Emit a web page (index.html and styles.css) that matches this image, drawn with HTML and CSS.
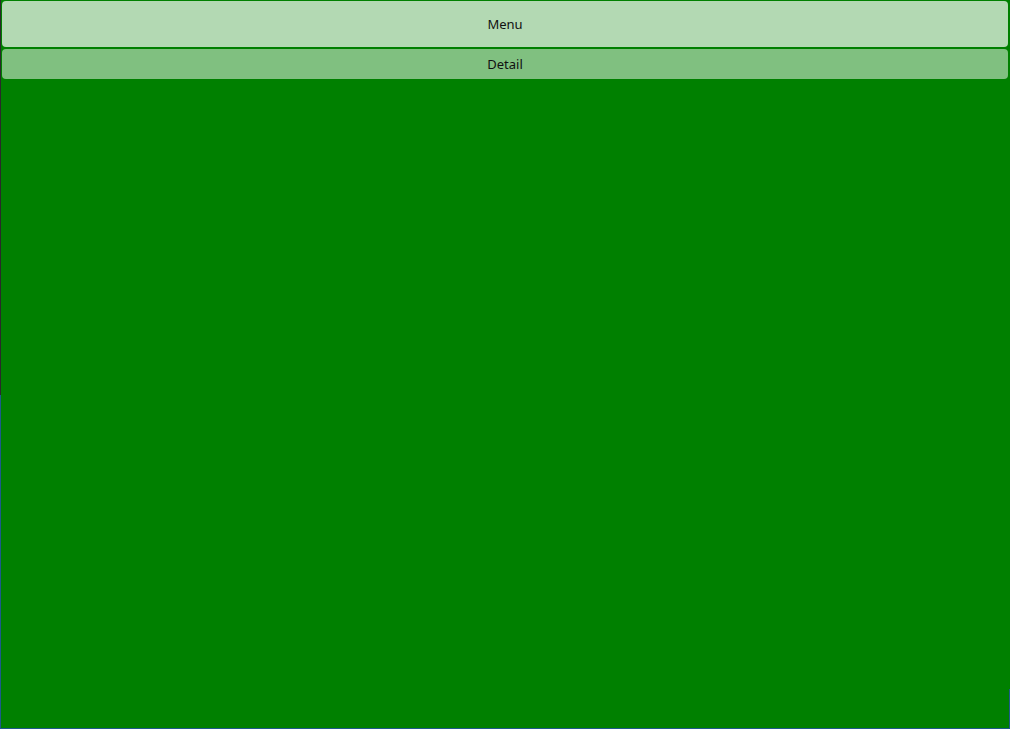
FILE: index.html
```html
<!DOCTYPE html>
<html>
<head>
<meta charset="utf-8">
<link rel="stylesheet" href="styles.css">
</head>
<body>
<div class="app">
  <div class="btn menu">Menu</div>
  <div class="btn detail">Detail</div>
</div>
</body>
</html>
```
FILE: styles.css
```css
html, body {
  margin: 0;
  padding: 0;
  width: 1010px;
  height: 729px;
  overflow: hidden;
}
body {
  background: #008000;
  font-family: "Noto Sans", "Open Sans", sans-serif;
  font-size: 13px;
  color: #111;
}
.app {
  box-sizing: border-box;
  width: 1010px;
  height: 729px;
  padding: 1px 2px 0 2px;
  display: flex;
  flex-direction: column;
  gap: 2px;
  background:
    linear-gradient(#2a2a2a 0, #2a2a2a 395px, #1d5a8a 395px) left top / 1px 100% no-repeat,
    linear-gradient(#1d5a8a, #1d5a8a) left bottom / 100% 1px no-repeat,
    linear-gradient(#1d5a8a, #1d5a8a) right bottom / 1px 40px no-repeat,
    #008000;
}
.btn {
  display: flex;
  align-items: center;
  justify-content: center;
  border-radius: 4px;
}
.menu {
  height: 46px;
  background: #b3d9b3;
}
.detail {
  height: 30px;
  background: #80c080;
}
```
